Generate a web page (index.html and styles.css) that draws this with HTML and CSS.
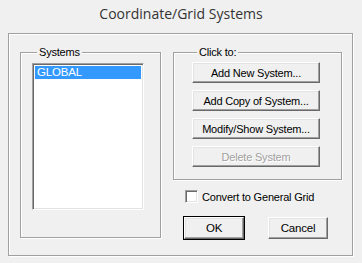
FILE: index.html
```html
<!DOCTYPE html>
<html lang="en">
<head>
  <meta charset="UTF-8" />
  <title>Coordinate/Grid Systems</title>
  <link rel="stylesheet" href="styles.css">
</head>
<body>
  <div class="dialog">
    <div class="title">Coordinate/Grid Systems</div>
    <div class="frame">
      <fieldset class="group systems">
        <legend>Systems</legend>
        <div class="listbox">
          <div class="item selected">GLOBAL</div>
        </div>
      </fieldset>
      <div class="side">
        <fieldset class="group actions">
          <legend>Click to:</legend>
          <button class="btn wide">Add New System...</button>
          <button class="btn wide">Add Copy of System...</button>
          <button class="btn wide">Modify/Show System...</button>
          <button class="btn wide" disabled>Delete System</button>
        </fieldset>
        <label class="check"><span class="box"></span>Convert to General Grid</label>
        <div class="footer">
          <button class="btn small default">OK</button>
          <button class="btn small">Cancel</button>
        </div>
      </div>
    </div>
  </div>
</body>
</html>
```

FILE: styles.css
```css
body {
  margin: 0;
  background: #f0f0f0;
  font-family: 'Liberation Sans', Arial, sans-serif;
  font-size: 11px;
  letter-spacing: -0.2px;
  color: #000;
}
.dialog {
  width: 362px;
  height: 263px;
}
.title {
  height: 33px;
  line-height: 28px;
  text-align: center;
  font-family: 'Open Sans', sans-serif;
  font-size: 14px;
  letter-spacing: 0;
  color: #333;
}
.frame {
  margin-left: 8px;
  width: 343px;
  height: 221px;
  border: 1px solid #a0a0a0;
  box-shadow: inset 1px 1px #fff, 1px 1px #fff;
  box-sizing: content-box;
  display: flex;
  align-items: flex-start;
}
.group {
  margin: 0;
  border: 1px solid #a0a0a0;
  box-shadow: inset 1px 1px #fff, 1px 1px #fff;
  box-sizing: border-box;
}
.group legend {
  padding: 0 2px;
  margin-left: 5px;
  line-height: 12px;
  background: #f0f0f0;
}
.systems {
  margin: 12px 0 0 11px;
  width: 141px;
  height: 192px;
  padding: 5px 0 0 11px;
}
.listbox {
  width: 112px;
  height: 147px;
  box-sizing: border-box;
  background: #fff;
  border-top: 1px solid #a0a0a0;
  border-left: 1px solid #a0a0a0;
  border-right: 1px solid #fff;
  border-bottom: 1px solid #fff;
  box-shadow: inset 1px 1px #696969, inset -1px -1px #e3e3e3;
  padding: 2px;
}
.item {
  height: 13px;
  line-height: 13px;
  padding-left: 2px;
  font-size: 11.5px;
}
.item.selected {
  background: #3399ff;
  color: #fff;
}
.side {
  margin: 12px 0 0 12px;
  width: 169px;
  display: flex;
  flex-direction: column;
}
.actions {
  height: 134px;
  padding: 4px 0 0 18px;
  display: flex;
  flex-direction: column;
  gap: 7px;
}
.btn {
  height: 21px;
  padding: 0;
  font-family: inherit;
  font-size: 11px;
  letter-spacing: -0.2px;
  color: #000;
  background: #f0f0f0;
  border-top: 1px solid #fff;
  border-left: 1px solid #fff;
  border-right: 1px solid #696969;
  border-bottom: 1px solid #696969;
  box-shadow: inset -1px -1px #a0a0a0, inset 1px 1px #e3e3e3;
  border-radius: 0;
}
.btn.wide {
  width: 128px;
}
.btn:disabled {
  color: #a0a0a0;
  text-shadow: 1px 1px #fff;
}
.check {
  display: flex;
  align-items: center;
  margin: 10px 0 0 12px;
}
.box {
  width: 13px;
  height: 13px;
  box-sizing: border-box;
  background: #fff;
  border-top: 1px solid #a0a0a0;
  border-left: 1px solid #a0a0a0;
  border-right: 1px solid #fff;
  border-bottom: 1px solid #fff;
  box-shadow: inset 1px 1px #696969, inset -1px -1px #e3e3e3;
  margin-right: 4px;
}
.footer {
  display: flex;
  gap: 24px;
  margin: 14px 0 0 11px;
}
.btn.small {
  width: 60px;
  height: 22px;
  font-size: 11.5px;
}
.btn.default {
  outline: 1px solid #000;
  outline-offset: 0;
}
```
